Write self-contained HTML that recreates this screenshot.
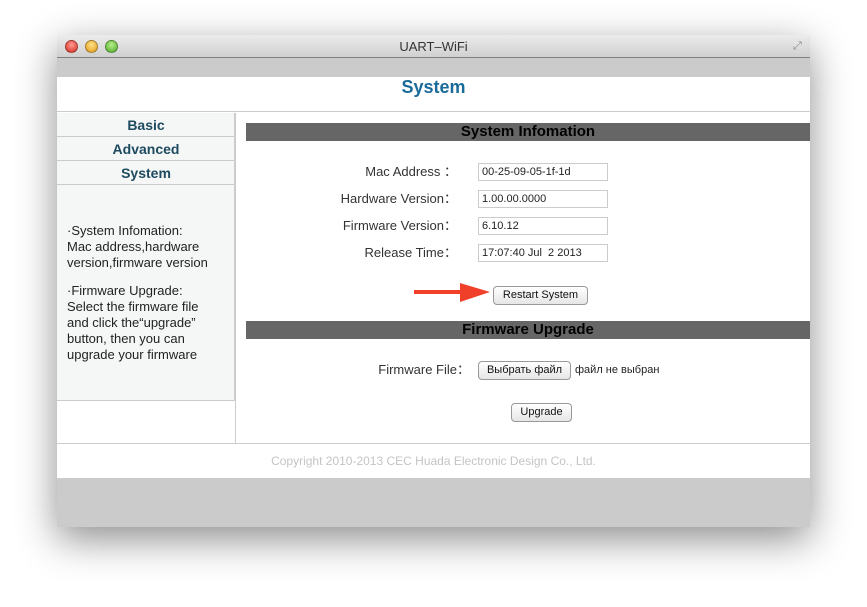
<!DOCTYPE html>
<html><head><meta charset="utf-8"><style>
*{margin:0;padding:0;box-sizing:border-box}
body{width:867px;height:607px;background:#fff;position:relative;overflow:hidden;font-family:"Liberation Sans",Arial,sans-serif}
.a{position:absolute}
.win{left:57px;top:35px;width:753px;height:492px;background:#cbcbcb;box-shadow:0 12px 40px rgba(0,0,0,.45);border-radius:4px 4px 0 0;overflow:hidden}
.tb{left:0;top:0;width:753px;height:23px;background:linear-gradient(#ececec,#d0d0d0);border-bottom:1px solid #808080;text-align:center;font-size:13px;line-height:23px;color:#333}
.dot{top:5px;width:13px;height:13px;border-radius:50%;border:1px solid rgba(0,0,0,.3)}
.lbl{font-size:13px;color:#333;text-align:right;width:150px;white-space:nowrap}
.inp{height:18px;width:130px;border:1px solid #ccc;font-size:11px;line-height:16px;padding-left:3px;color:#222;background:#fff}
.bar{left:189px;width:564px;height:18px;background:#666;font-weight:bold;font-size:15px;text-align:center;line-height:18px;color:#000}
.btn{border:1px solid #999;border-radius:4px;background:linear-gradient(#fff,#e6e6e6);font-size:11px;text-align:center;line-height:17px;height:19px;color:#111}
.nav{left:0;width:178px;height:24px;border-bottom:1px solid #ccc;text-align:center;font-weight:bold;font-size:14px;color:#1e4a60;line-height:24px}
</style></head><body>
<div class="a win">
 <div class="a tb">UART–WiFi</div>
 <div class="a dot" style="left:8px;background:radial-gradient(circle at 50% 35%,#ff9a90,#d42a1f)"></div>
 <div class="a dot" style="left:28px;background:radial-gradient(circle at 50% 35%,#ffe08a,#e09a15)"></div>
 <div class="a dot" style="left:48px;background:radial-gradient(circle at 50% 35%,#b8f08a,#4ea82a)"></div>
 <div class="a" style="left:736px;top:5px;font-size:11px;color:#888">⤢</div>
 <div class="a" style="left:0;top:42px;width:753px;height:401px;background:#fff"></div>
 <div class="a" style="left:0;top:42px;width:753px;height:35px;border-bottom:1px solid #ccc;text-align:center;font-weight:bold;font-size:18px;color:#1a6b9a;line-height:20px">System</div>
 <div class="a" style="left:0;top:78px;width:178px;height:288px;background:#f5f7f6;border-right:1px solid #ccc;border-bottom:1px solid #ccc"></div>
 <div class="a" style="left:178px;top:78px;width:1px;height:330px;background:#ccc"></div>
 <div class="a nav" style="top:78px">Basic</div>
 <div class="a nav" style="top:102px">Advanced</div>
 <div class="a nav" style="top:126px">System</div>
 <div class="a" style="left:10px;top:188px;width:152px;font-size:13px;line-height:16px;color:#222">·System Infomation:<br>Mac address,hardware version,firmware version<div style="height:12px"></div>·Firmware Upgrade:<br>Select the firmware file and click the“upgrade” button, then you can upgrade your firmware</div>
 <div class="a bar" style="top:88px">System Infomation</div>
 <div class="a lbl" style="left:250px;top:126px">Mac Address ：</div>
 <div class="a inp" style="left:421px;top:128px">00-25-09-05-1f-1d</div>
 <div class="a lbl" style="left:250px;top:153px">Hardware Version：</div>
 <div class="a inp" style="left:421px;top:155px">1.00.00.0000</div>
 <div class="a lbl" style="left:250px;top:180px">Firmware Version：</div>
 <div class="a inp" style="left:421px;top:182px">6.10.12</div>
 <div class="a lbl" style="left:250px;top:207px">Release Time：</div>
 <div class="a inp" style="left:421px;top:209px">17:07:40 Jul &nbsp;2 2013</div>
 <svg class="a" style="left:355px;top:246px" width="80" height="24"><path d="M2 11h48" stroke="#f0402a" stroke-width="4"/><path d="M48 2L78 11L48 21Z" fill="#f0402a"/></svg>
 <div class="a btn" style="left:436px;top:251px;width:95px">Restart System</div>
 <div class="a bar" style="top:286px">Firmware Upgrade</div>
 <div class="a lbl" style="left:263px;top:324px">Firmware File：</div>
 <div class="a btn" style="left:421px;top:326px;width:93px">Выбрать файл</div>
 <div class="a" style="left:518px;top:329px;font-size:11px;color:#222">файл не выбран</div>
 <div class="a btn" style="left:454px;top:368px;width:61px">Upgrade</div>
 <div class="a" style="left:0;top:408px;width:753px;height:1px;background:#ccc"></div>
 <div class="a" style="left:0;top:419px;width:753px;text-align:center;font-size:12px;color:#c4c4c4">Copyright 2010-2013 CEC Huada Electronic Design Co., Ltd.</div>
</div>
</body></html>
